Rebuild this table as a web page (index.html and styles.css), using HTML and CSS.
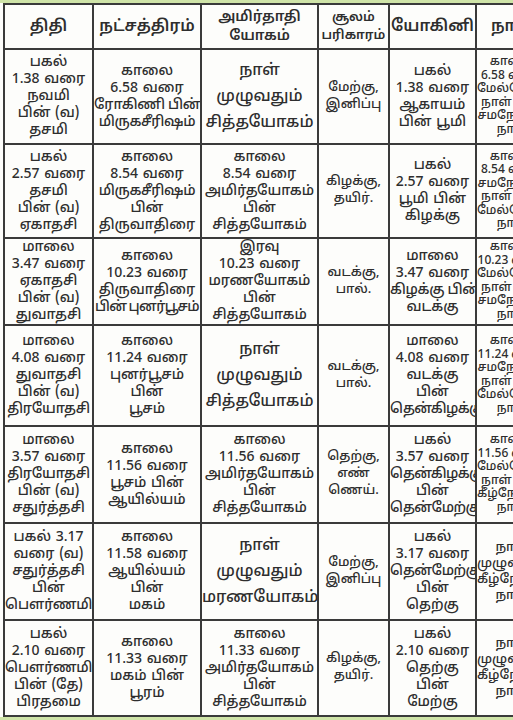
FILE: index.html
```html
<!DOCTYPE html>
<html lang="ta">
<head>
<meta charset="utf-8">
<link rel="stylesheet" href="styles.css">
</head>
<body>
<div class="band top"></div>
<div class="wrap">
<table class="pan">
<colgroup>
<col class="c1"><col class="c2"><col class="c3"><col class="c4"><col class="c5"><col class="c6">
</colgroup>
<tr class="hd">
<th>திதி</th>
<th>நட்சத்திரம்</th>
<th class="two">அமிர்தாதி<br>யோகம்</th>
<th class="small">சூலம்<br>பரிகாரம்</th>
<th>யோகினி</th>
<th>நாள்</th>
</tr>
<tr class="r1">
<td>பகல்<br>1.38 வரை<br>நவமி<br>பின் (வ)<br>தசமி</td>
<td>காலை<br>6.58 வரை<br><span class="t">ரோகிணி பின்</span><br><span class="t">மிருகசீரிஷம்</span></td>
<td class="big">நாள்<br>முழுவதும்<br>சித்தயோகம்</td>
<td class="dir">மேற்கு,<br>இனிப்பு</td>
<td>பகல்<br>1.38 வரை<br>ஆகாயம்<br>பின் பூமி</td>
<td class="sm">காலை<br>6.58 வரை<br>மேல்நோக்கு<br>நாள் பின்<br>சமநோக்கு<br>நாள்</td>
</tr>
<tr class="r2">
<td>பகல்<br>2.57 வரை<br>தசமி<br>பின் (வ)<br>ஏகாதசி</td>
<td>காலை<br>8.54 வரை<br><span class="t">மிருகசீரிஷம்</span><br>பின்<br>திருவாதிரை</td>
<td>காலை<br>8.54 வரை<br>அமிர்தயோகம்<br>பின்<br>சித்தயோகம்</td>
<td class="dir">கிழக்கு,<br>தயிர்.</td>
<td>பகல்<br>2.57 வரை<br>பூமி பின்<br>கிழக்கு</td>
<td class="sm">காலை<br>8.54 வரை<br>சமநோக்கு<br>நாள் பின்<br>மேல்நோக்கு<br>நாள்</td>
</tr>
<tr class="r3">
<td>மாலை<br>3.47 வரை<br>ஏகாதசி<br>பின் (வ)<br>துவாதசி</td>
<td>காலை<br>10.23 வரை<br>திருவாதிரை<br><span class="tt">பின் புனர்பூசம்</span></td>
<td>இரவு<br>10.23 வரை<br>மரணயோகம்<br>பின்<br>சித்தயோகம்</td>
<td class="dir">வடக்கு,<br>பால்.</td>
<td>மாலை<br>3.47 வரை<br><span class="t">கிழக்கு பின்</span><br>வடக்கு</td>
<td class="sm">காலை<br>10.23 வரை<br>மேல்நோக்கு<br>நாள் பின்<br>சமநோக்கு<br>நாள்</td>
</tr>
<tr class="r4">
<td>மாலை<br>4.08 வரை<br>துவாதசி<br>பின் (வ)<br><span class="t">திரயோதசி</span></td>
<td>காலை<br>11.24 வரை<br>புனர்பூசம்<br>பின்<br>பூசம்</td>
<td class="big">நாள்<br>முழுவதும்<br>சித்தயோகம்</td>
<td class="dir">வடக்கு,<br>பால்.</td>
<td>மாலை<br>4.08 வரை<br>வடக்கு<br>பின்<br><span class="tt">தென்கிழக்கு</span></td>
<td class="sm">காலை<br>11.24 வரை<br>சமநோக்கு<br>நாள் பின்<br>மேல்நோக்கு<br>நாள்</td>
</tr>
<tr class="r5">
<td>மாலை<br>3.57 வரை<br><span class="t">திரயோதசி</span><br>பின் (வ)<br>சதுர்த்தசி</td>
<td>காலை<br>11.56 வரை<br>பூசம் பின்<br>ஆயில்யம்</td>
<td>காலை<br>11.56 வரை<br>அமிர்தயோகம்<br>பின்<br>சித்தயோகம்</td>
<td class="dir">தெற்கு,<br>எண்<br>ணெய்.</td>
<td>பகல்<br>3.57 வரை<br><span class="tt">தென்கிழக்கு</span><br>பின்<br><span class="tt">தென்மேற்கு</span></td>
<td class="sm">காலை<br>11.56 வரை<br>மேல்நோக்கு<br>நாள் பின்<br>கீழ்நோக்கு<br>நாள்</td>
</tr>
<tr class="r6">
<td>பகல் 3.17<br>வரை (வ)<br>சதுர்த்தசி<br>பின்<br><span class="t">பௌர்ணமி</span></td>
<td>காலை<br>11.58 வரை<br>ஆயில்யம்<br>பின்<br>மகம்</td>
<td class="big">நாள்<br>முழுவதும்<br>மரணயோகம்</td>
<td class="dir">மேற்கு,<br>இனிப்பு</td>
<td>பகல்<br>3.17 வரை<br><span class="tt">தென்மேற்கு</span><br>பின்<br>தெற்கு</td>
<td class="sm big2">நாள்<br>முழுவதும்<br>கீழ்நோக்கு<br>நாள்</td>
</tr>
<tr class="r7">
<td>பகல்<br>2.10 வரை<br><span class="t">பௌர்ணமி</span><br>பின் (தே)<br>பிரதமை</td>
<td>காலை<br>11.33 வரை<br>மகம் பின்<br>பூரம்</td>
<td>காலை<br>11.33 வரை<br>அமிர்தயோகம்<br>பின்<br>சித்தயோகம்</td>
<td class="dir">கிழக்கு,<br>தயிர்.</td>
<td>பகல்<br>2.10 வரை<br>தெற்கு<br>பின்<br>மேற்கு</td>
<td class="sm big2">நாள்<br>முழுவதும்<br>கீழ்நோக்கு<br>நாள்</td>
</tr>
</table>
</div>
<div class="band bottom"></div>
</body>
</html>
```
FILE: styles.css
```css
html, body {
  margin: 0;
  padding: 0;
  background: #fdfdfb;
  overflow: hidden;
  width: 513px;
  height: 720px;
}
body {
  font-family: "Noto Sans Tamil", "Lohit Tamil", "Noto Sans", sans-serif;
  color: #2e2e2e;
  display: flex;
  flex-direction: column;
}
.band {
  background: #cfe4a8;
  flex: none;
}
.band.top { height: 3px; }
.band.bottom { height: 6px; }
.wrap {
  flex: none;
  width: 513px;
  overflow: hidden;
  padding-left: 3px;
  box-sizing: border-box;
}
.pan {
  border-collapse: collapse;
  table-layout: fixed;
  width: 544px;
}
.c1 { width: 89px; }
.c2 { width: 108px; }
.c3 { width: 117px; }
.c4 { width: 71px; }
.c5 { width: 87px; }
.c6 { width: 72px; }
.pan th, .pan td {
  border: 2px solid #3a3a3a;
  text-align: center;
  vertical-align: middle;
  padding: 0;
  font-size: 14px;
  line-height: 17px;
  font-weight: 500;
  word-spacing: 1px;
  overflow: hidden;
  white-space: nowrap;
}
.t { letter-spacing: -0.3px; word-spacing: 0; }
.tt { letter-spacing: -0.6px; word-spacing: -1px; }
.pan th {
  font-size: 16px;
  line-height: 18px;
  font-weight: 600;
  word-spacing: 0;
}
.pan th.two { font-size: 14.5px; line-height: 19px; }
.pan th.small { font-size: 13px; line-height: 18px; }
.pan td.big { font-size: 16px; line-height: 26px; }
.pan td.dir { font-size: 13px; line-height: 17px; word-spacing: 0; }
.pan td.sm { font-size: 12px; line-height: 13.5px; word-spacing: 0; }
.pan td.sm.big2 { font-size: 13px; line-height: 16px; }
.hd { height: 45px; }
.r1 { height: 95px; }
.r2 { height: 94px; }
.r3 { height: 87px; }
.r4 { height: 101px; }
.r5 { height: 97px; }
.r6 { height: 97px; }
.r7 { height: 96px; }
```
